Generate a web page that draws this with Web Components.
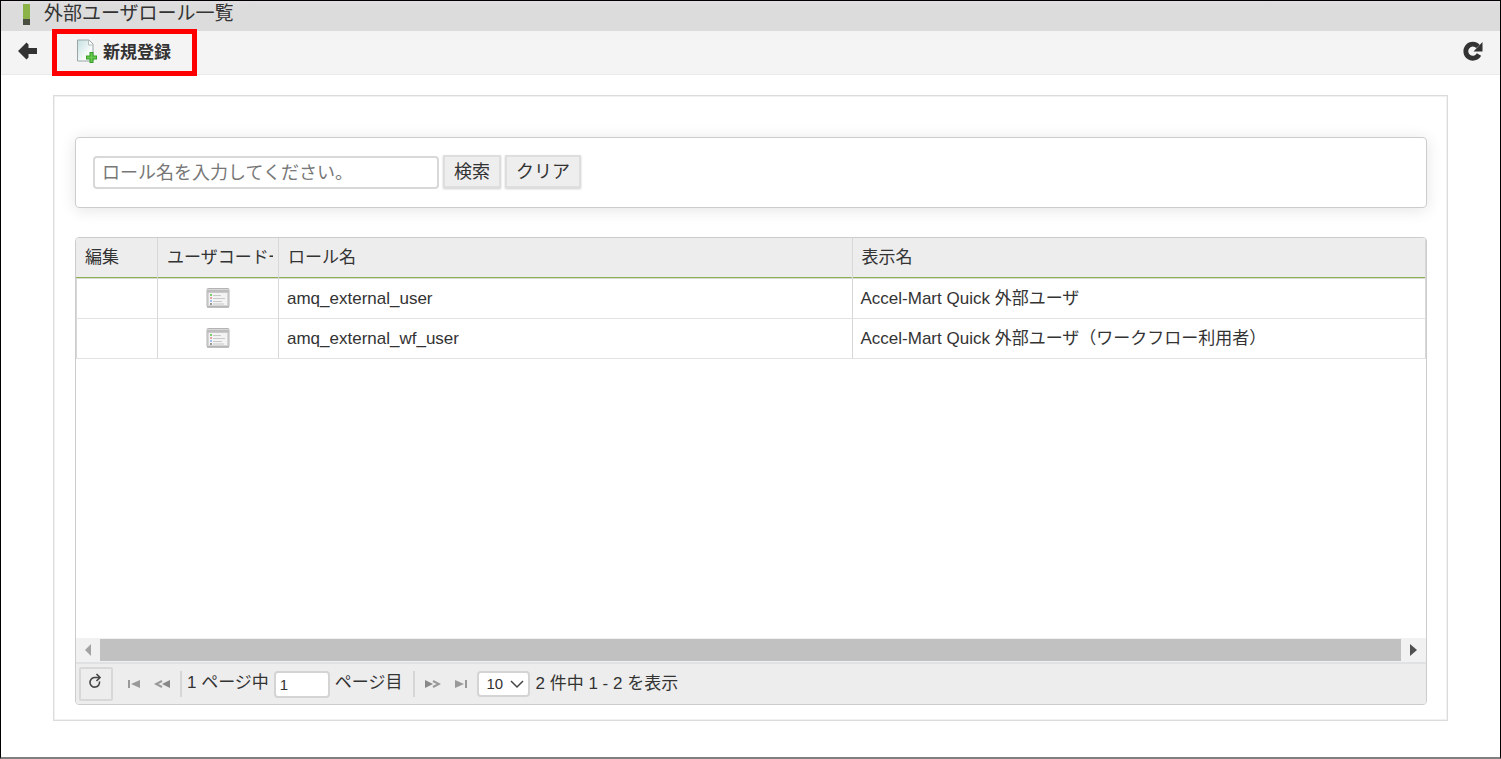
<!DOCTYPE html>
<html lang="ja">
<head>
<meta charset="utf-8">
<meta name="viewport" content="width=device-width, initial-scale=1">
<title>外部ユーザロール一覧</title>
<style>
  html { height: 100%; }
  body {
    margin: 0;
    min-height: 100%;
    display: flex;
    flex-direction: column;
    box-sizing: border-box;
    border: 1px solid #000;
    border-bottom: 2px solid #808080;
    background: #fff;
    color: #333;
    font: 17px/24px "Liberation Sans", "Noto Sans CJK JP", sans-serif;
    --line: #d8d8d8;
    --bar: #ededed;
    --cjk: "Noto Sans CJK JP", "Liberation Sans", sans-serif;
  }
  role-panel { flex: 1; }
  role-grid { flex: 1; }
</style>
</head>
<body>
<page-title>外部ユーザロール一覧</page-title>
<tool-bar><tool-action highlighted>新規登録</tool-action></tool-bar>
<role-panel>
  <role-search></role-search>
  <role-grid></role-grid>
</role-panel>

<script>
const define = (name, html, setup) => customElements.define(name, class extends HTMLElement {
  constructor() {
    super();
    const template = document.createElement('template');
    template.innerHTML = html;
    this.attachShadow({ mode: 'open' }).append(template.content.cloneNode(true));
    if (setup) setup(this.shadowRoot, this);
  }
});

define('page-title', `
<style>
  :host { display: flex; align-items: flex-start; gap: 14px; height: 30px; padding-left: 22px; background: linear-gradient(#e2dfe2, #dcdcdc 5px); }
  .mark { width: 7px; height: 21px; margin-top: 3px; background: linear-gradient(#8bb348 15px, #4a4f42 15px); }
  h1 { margin: 0; font: 400 19px/22px var(--cjk); }
</style>
<span class="mark"></span><h1><slot></slot></h1>`);

define('tool-bar', `
<style>
  :host { display: flex; align-items: center; height: 43px; padding: 0 15px 0 16px; background: #f4f4f4; border-bottom: 1px solid #eaeaea; }
  button { display: flex; padding: 0 0 4px; border: 0; background: none; }
  .actions { flex: 1; display: flex; padding-left: 15px; }
  svg { display: block; }
</style>
<button type="button" aria-label="戻る"><svg width="20" height="18" viewBox="0 0 20 18"><path d="M1 9 9.500 0.500 11.500 2.500 V6 H20 V12 H11.500 V15.500 L9.500 17.500Z" fill="#333"/></svg></button>
<div class="actions"><slot></slot></div>
<button type="button" aria-label="更新"><svg width="24" height="22" viewBox="0 0 24 22"><path d="M18 14.500A7 7 0 1 1 17 6.500" fill="none" stroke="#333" stroke-width="4.800"/><path d="M21.500 2v9.500H12.500z" fill="#333"/></svg></button>`);

define('tool-action', `
<style>
  :host { display: block; position: relative; }
  :host([highlighted])::after { content: ""; position: absolute; inset: -2px 0 -2px 0; border: 5px solid #f00; pointer-events: none; }
  button { display: flex; align-items: center; gap: 6px; height: 43px; padding: 0 26px 4px 24px; border: 0; background: none; color: #333; font: 700 17px/24px var(--cjk); }
</style>
<button type="button"><svg width="21" height="24" viewBox="0 0 21 24">
  <defs><linearGradient id="paper" x2="1" y2="1"><stop stop-color="#c5e0e1"/><stop offset=".65" stop-color="#f7fafa"/></linearGradient></defs>
  <path d="M1.500 1H13l4 4v17H1.500z" fill="url(#paper)" stroke="#9aa6a6"/><path d="M12.500 1v5H17" fill="#fff" stroke="#b5bcbc"/>
  <path d="M13.500 13h4v3.500H21v4h-3.500V24h-4v-3.500H10v-4h3.500z" fill="#349e26"/><path d="M14.500 14h2v3.500H20v2h-3.500V23h-2v-3.500H11v-2h3.500z" fill="#67c94d"/>
</svg><span><slot></slot></span></button>`);

define('role-panel', `
<style>
  :host { display: flex; flex-direction: column; gap: 29px; margin: 20px 52px 36px; padding: 41px 20px 15px 21px; border: 1px solid #dcdcdc; box-shadow: inset 0 0 0 1px #f1f1f1; }
</style>
<slot></slot>`);

define('role-search', `
<style>
  :host { display: block; padding: 17px 18px 18px 17px; border: 1px solid #ccc; border-radius: 4px; box-shadow: 0 2px 16px #0000001c; }
  form { display: flex; gap: 4px; align-items: flex-start; }
  input, button { box-sizing: border-box; height: 33px; font: 18px/24px var(--cjk); }
  input { width: 346px; margin: 1px 0 0; padding: 0 7px 4px; border: 2px solid #d8d8d8; border-radius: 4px; }
  input::placeholder { color: #777; opacity: 1; }
  button { padding: 0 9px 4px; border: 2px solid #dedede; background: #eee; box-shadow: 0 1px 2px #0003; color: #333; }
</style>
<form><input type="text" aria-label="ロール名" placeholder="ロール名を入力してください。"><button type="button">検索</button><button type="button">クリア</button></form>`);

define('role-grid', `
<style>
  :host { display: flex; flex-direction: column; border: 1px solid #ccc; border-radius: 4px; overflow: hidden; }
  .body { flex: 1; }
  table { width: 100%; table-layout: fixed; border-spacing: 0; }
  .edit { width: 82px; } .users { width: 121px; }
  th, td { box-sizing: border-box; height: 40px; padding: 0 8px; text-align: left; font-weight: 400; white-space: nowrap; overflow: hidden; border-right: 1px solid var(--line); }
  th { height: 41px; padding-bottom: 4px; padding-right: 5px; background: linear-gradient(#8caf50, #8caf50) bottom / 100% 1px no-repeat padding-box, var(--bar); border-bottom: 1px solid var(--line); font-family: var(--cjk); }
  th > span { display: block; overflow: hidden; padding-left: 1px; }
  td { border-bottom: 1px solid #e2e2e2; }
  td:first-child { border-left: 1px solid var(--line); }
  td.icon { padding: 0; }
  td button { display: flex; margin: 0 auto; padding: 0 0 2px; border: 0; background: none; }
  .scroll { display: flex; align-items: center; height: 24px; background: #f1f1f1; border-bottom: 2px solid #dfe1e2; }
  .scroll svg { flex: none; } .thumb { flex: 1; height: 22px; background: #c1c1c1; }
</style>
<div class="body"><table>
  <colgroup><col class="edit"><col class="users"><col><col></colgroup>
  <thead><tr><th><span>編集</span></th><th><span>ユーザコード一</span></th><th><span>ロール名</span></th><th><span>表示名</span></th></tr></thead>
  <tbody></tbody>
</table></div>
<div class="scroll"><svg width="24" height="22"><path d="M15 5v12L9 11z" fill="#a3a3a3"/></svg><span class="thumb"></span><svg width="25" height="22"><path d="M9 5v12L16 11z" fill="#505050"/></svg></div>
<grid-pager></grid-pager>`, root => {
  const rows = [
    ['amq_external_user', 'Accel-Mart Quick 外部ユーザ'],
    ['amq_external_wf_user', 'Accel-Mart Quick 外部ユーザ（ワークフロー利用者）'],
  ];
  const icon = `<svg width="24" height="20" viewBox="0 0 24 20"><rect x="1" y=".5" width="22" height="18.500" rx="1" fill="#d6d6d6" stroke="#b4b4b4"/><path d="M1 1h22v3.500H1z" fill="#bdbdbd"/><path d="M1 1.500h22" stroke="#d7d7d7"/><path d="M3 5h18v12H3z" fill="#f3f3f3"/><path d="M4 7h2" stroke="#7bd06e" stroke-width="2"/><path d="M4 10h2" stroke="#e4a4a4" stroke-width="2"/><path d="M4 13h2" stroke="#9ec0f2" stroke-width="2"/><path d="M4 16h2" stroke="#999" stroke-width="2"/><path d="M7 7.500h8M7 10.500h12M7 13.500h9M7 16h11" stroke="#c9c9c9"/><path d="M1 19h22" stroke="#a4a4a4"/></svg>`;
  root.querySelector('tbody').innerHTML = rows.map(([role, label]) =>
    `<tr><td></td><td class="icon"><button type="button" aria-label="ユーザコード一覧">${icon}</button></td><td>${role}</td><td>${label}</td></tr>`).join('');
});

define('grid-pager', `
<style>
  :host { display: flex; align-items: center; height: 40px; padding-left: 3px; background: var(--bar); }
  button { display: flex; justify-content: center; align-items: center; flex: none; width: 28px; height: 34px; padding: 0; border: 0; background: none; }
  .reload { box-sizing: border-box; width: 34px; margin-right: 7px; padding: 0 2px 6px 0; border: 2px solid #d8d8d8; border-radius: 2px; }
  i { width: 2px; height: 26px; background: #d6d6d6; }
  .after { margin: 0 4px 0 10px; }
  label { display: flex; align-items: center; gap: 5px; padding-left: 5px; white-space: nowrap; }
  label span { padding-bottom: 2px; }
  .first { margin-left: 4px; }
  input, select { box-sizing: border-box; height: 27px; margin: 0; border: 2px solid #d4d4d4; border-radius: 4px; background-color: #fff; color: #333; font: 15px/20px "Liberation Sans", sans-serif; }
  input { width: 56px; padding: 0 4px; }
  .size { position: relative; display: flex; margin: 0 6px 0 2px; }
  select { width: 53px; height: 26px; padding: 0 8px; appearance: none; }
  .size svg { position: absolute; right: 6px; top: 8px; pointer-events: none; }
  svg { display: block; }
</style>
<button class="reload" type="button" aria-label="再読み込み"><svg width="14" height="16" viewBox="0 0 14 16"><path d="M11.500 8.500A4.800 4.800 0 1 1 6.500 4.500H11" fill="none" stroke="#444" stroke-width="1.600"/><path d="M8.500 1l3.500 3.500L8.500 8" fill="none" stroke="#444" stroke-width="1.600"/></svg></button>
<button type="button" aria-label="最初のページ"><svg width="14" height="10"><path d="M1 1h2v8H1zM13 1v8L4 5z" fill="#999"/></svg></button>
<button type="button" aria-label="前のページ"><svg width="17" height="10"><path d="M16 1v8L8 5z" fill="#888"/><path d="M8 2 2 5l6 3" fill="none" stroke="#999" stroke-width="2"/></svg></button>
<i class="first"></i>
<label><span>1 ページ中</span><input type="text" value="1"><span>ページ目</span></label>
<i class="after"></i>
<button type="button" aria-label="次のページ"><svg width="17" height="10"><path d="M1 1v8L9 5z" fill="#888"/><path d="M9 2l6 3-6 3" fill="none" stroke="#999" stroke-width="2"/></svg></button>
<button type="button" aria-label="最後のページ"><svg width="14" height="10"><path d="M11 1h2v8h-2zM1 1v8l9-4z" fill="#999"/></svg></button>
<span class="size"><select aria-label="表示件数"><option>10</option><option>20</option><option>50</option></select><svg width="14" height="10"><path d="M1 2l6 6 6-6" fill="none" stroke="#444" stroke-width="1.500"/></svg></span>
<span>2 件中 1 - 2 を表示</span>`);
</script>
</body>
</html>
